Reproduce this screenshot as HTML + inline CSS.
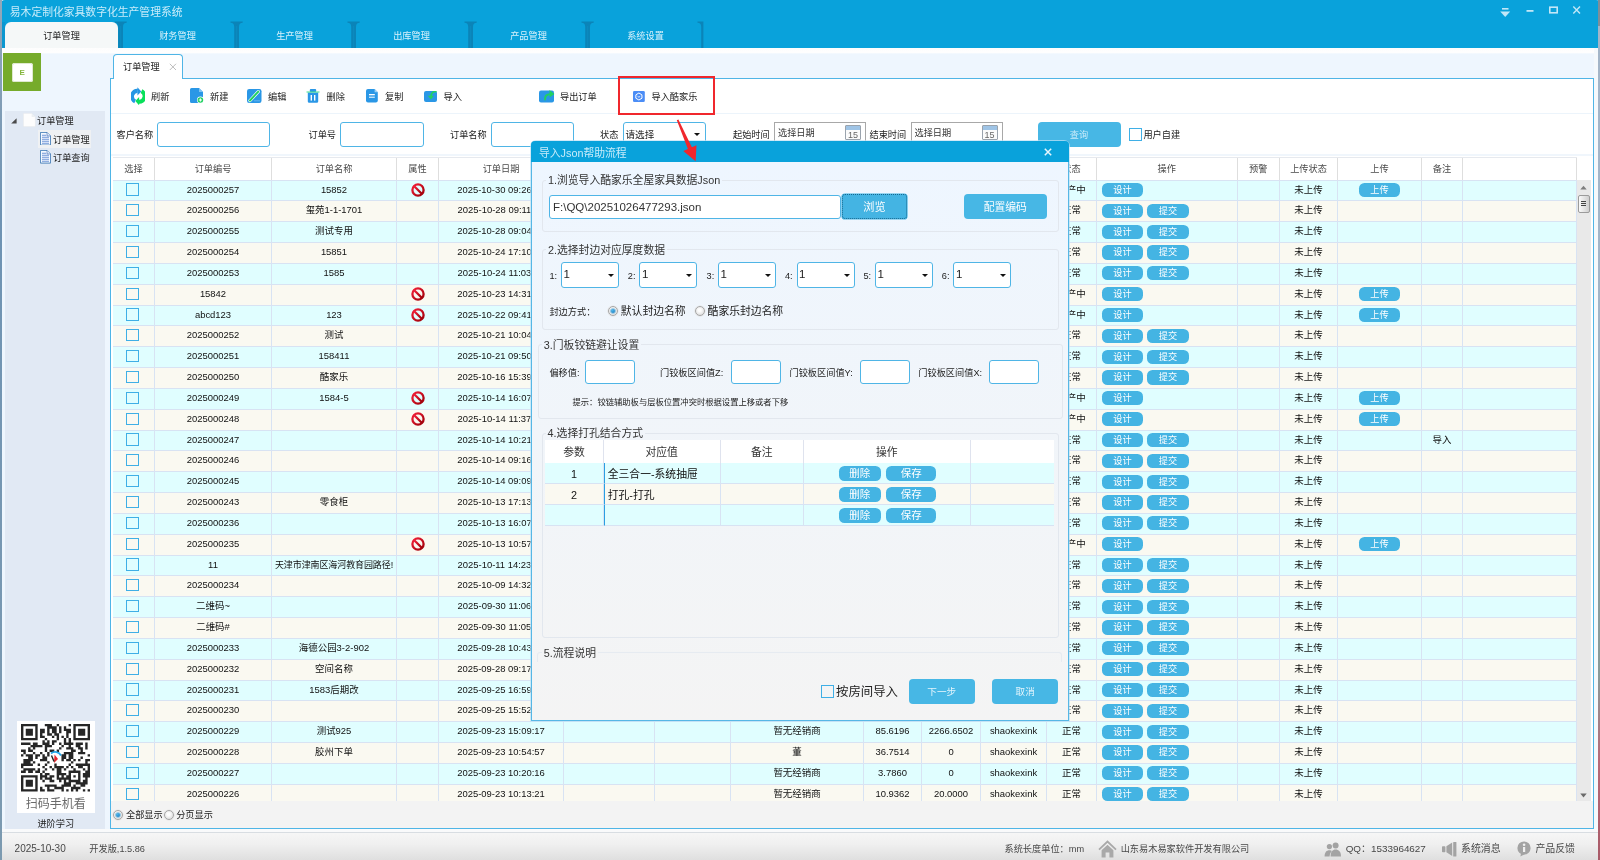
<!DOCTYPE html>
<html lang="zh-CN">
<head>
<meta charset="utf-8">
<title>易木定制化家具数字化生产管理系统</title>
<style>
*{box-sizing:border-box;margin:0;padding:0}
html,body{width:1600px;height:860px;overflow:hidden}
html{background:#8fa5b8}
body{position:relative;will-change:transform;background:#eef6fe;font-family:"Liberation Sans","Noto Sans CJK SC",sans-serif;font-size:9.2px;color:#222;line-height:1}
.abs{position:absolute}
/* ---------- top header ---------- */
#hdr{position:absolute;left:0;top:0;width:1600px;height:48px;background:#09a2db;border-radius:5px 4px 0 0}
#hdr .edgeL{position:absolute;left:1.7px;top:22px;width:3px;height:26px;background:#0a97d0}
#title{position:absolute;left:9.8px;top:5.7px;font-size:10.8px;color:#c9ecfa;line-height:13px;white-space:nowrap}
.mtab{position:absolute;top:22px;height:26px;width:113px;text-align:center;line-height:29px;font-size:9.2px;color:#d8f1fb;white-space:nowrap}
.mtab.act{z-index:2;background:#f5f8f8;color:#222;border-radius:6px 6px 0 0}
.msep{position:absolute;top:21px;width:13px;height:27px}
#hdrfade{position:absolute;left:2px;top:48px;width:1598px;height:5.5px;background:linear-gradient(#fdfdfd,#fefefe 75%,#eef6fe)}
/* ---------- sidebar ---------- */
#logo{position:absolute;left:3px;top:53px;width:38px;height:38px;background:#76ab2b}
#tree{position:absolute;left:5px;top:111px;width:100px;height:718px;background:#e1e9f4}
.tn{position:absolute;white-space:nowrap;font-size:9.2px;line-height:12px;color:#222}
/* ---------- inner tab + panel ---------- */
#itab{position:absolute;left:113px;top:54px;width:70px;height:25px;background:#fff;border:1px solid #4fb5e6;border-bottom:none;border-radius:4px 4px 0 0;z-index:2}
#itab span{position:absolute;left:9px;top:6px;font-size:9.2px;line-height:12px}
#panel{position:absolute;left:110px;top:78px;width:1484px;height:751px;background:#fff;border:1px solid #4fb5e6}
#panelbot{position:absolute;left:111px;top:800.5px;width:1482px;height:27.5px;background:#f3f3f3}
.tbtn{position:absolute;top:90px;height:14px;line-height:14px;font-size:9.2px;white-space:nowrap;color:#222}
.tbtn svg{position:absolute;left:0;top:0}
#tsep{position:absolute;left:111px;top:112.5px;width:1482px;height:1px;background:#ecf4fb}
.lbl{position:absolute;font-size:9.2px;line-height:12px;white-space:nowrap;color:#222}
.inp{position:absolute;background:#fff;border:1px solid #4fb5e6;border-radius:3px}
/* ---------- main table ---------- */
#grid{position:absolute;left:113px;top:157px;width:1463.5px;height:643.5px;overflow:hidden;background:#fff}
.thead{position:absolute;left:0;top:0;width:1464px;height:22.6px;background:#fff;border-top:1px solid #e6e9ee;border-bottom:none}
.th{position:absolute;top:0;height:21.6px;line-height:22.5px;text-align:center;color:#4a4a4a;border-right:1px solid #dedede;white-space:nowrap;overflow:hidden}
.tr{position:absolute;left:0;width:1464px;height:23px;border-top:1px solid #d8e3f3}
.tr.ra{background:#e0feff}
.tr.rb{background:#faf9f1}
.td{position:absolute;top:0;height:22px;line-height:18.4px;font-size:9.45px;text-align:center;border-right:1px solid #d8e3f3;white-space:nowrap;overflow:hidden;color:#111}
.td.lt{font-size:9px;letter-spacing:-0.1px}
.td.op{text-align:left;padding-left:4.6px}
.cb{display:inline-block;width:12.2px;height:12.2px;border:1.1px solid #3fafe6;background:transparent;margin-left:-2px;vertical-align:middle;margin-top:-1px}
.ban{display:inline-block;vertical-align:middle;margin-top:-0.5px;margin-left:0px}
.pill{display:inline-block;width:41.6px;height:14.3px;line-height:14.3px;border-radius:5.5px;background:#44b4e3;color:#fff;text-align:center;vertical-align:middle;margin-top:0px;font-size:9.2px}
.pill.p2{margin-left:4px}
/* ---------- footer ---------- */
#ftline{position:absolute;left:2px;top:832px;width:1598px;height:1px;background:#d8dde2}
#foot{position:absolute;left:2px;top:833px;width:1598px;height:27px;background:linear-gradient(#f6f6f6,#f0f0f0 40%,#dfdfdf)}
.ft{position:absolute;top:842.8px;font-size:9.2px;line-height:12px;white-space:nowrap;color:#484848}

.caret{position:absolute;width:0;height:0;border-left:3px solid transparent;border-right:3px solid transparent;border-top:3.5px solid #111}
.dinp{position:absolute;background:#fff;border:1px solid #a8a8a8}
.cal{position:absolute;width:16px;height:15px;border:1px solid #9aa3ad;background:#fbfbfb;border-radius:1px}
.cal b{position:absolute;left:0;top:0;width:14px;height:3.5px;background:#9fc4e6}
.cal i{position:absolute;left:0;top:4px;width:14px;text-align:center;font-style:normal;font-size:9px;line-height:10px;color:#666}
.radio{position:absolute;width:10px;height:10px;border-radius:50%;border:1px solid #a6a6a6;background:radial-gradient(circle at 45% 40%,#fdfdfd 20%,#d4d4d4);box-shadow:0 0 0 0.6px #e4e4e4}
.radio.on:after{content:"";position:absolute;left:2px;top:2px;width:4px;height:4px;border-radius:50%;background:radial-gradient(circle at 40% 35%,#49b4ea,#1173b8);box-shadow:0 0 0 0.8px #7dbbe0}
/* ---------- dialog ---------- */
#dlg{position:absolute;left:531px;top:141px;width:538px;height:580px;background:linear-gradient(#eef6ff 21px,#f4f4f4 100%);border-radius:5px 5px 0 0;border:1px solid #56b7e6;border-top:none;z-index:20;box-shadow:0 0 0 1px rgba(190,225,245,.7)}
#dlgt{position:absolute;left:-1px;top:0;width:538px;height:21px;background:#09a2db;border-radius:4px 4px 0 0}
#dlgt span{position:absolute;left:8px;top:5.5px;font-size:10.8px;line-height:13px;color:#c9ecfa;white-space:nowrap}
.gb{position:absolute;border:1px solid #e2e7ee;border-radius:3px}
.lg{position:absolute;font-size:10.8px;line-height:14px;white-space:nowrap;background:#f0f7fe;color:#333;padding:0 2px}
.dl{position:absolute;font-size:9.2px;line-height:12px;white-space:nowrap;color:#222}
.dbtn{position:absolute;background:#47b7e5;color:#fafdff;text-align:center;border-radius:4px;white-space:nowrap}
.sel{position:absolute;top:121.4px;width:58px;height:25.2px;background:#fff;border:1px solid #4fb5e6;border-radius:3px}
.sel span{position:absolute;left:1.6px;top:5px;font-size:11.5px;line-height:13px;color:#222}
.sel .caret{left:46px;top:10.5px}
.dth{position:absolute;top:0;height:23px;line-height:25px;text-align:center;font-size:10.8px;color:#333;border-right:1px solid #dfe3ee;background:#fff;white-space:nowrap}
.dtr{position:absolute;left:0;width:509px;height:20.9px}
.dtd{position:absolute;top:0;height:20.9px;line-height:22.6px;border-right:1px solid #d8e3f3;border-bottom:1px solid #d8e3f3;font-size:10.8px;white-space:nowrap;overflow:hidden;color:#111}
.dpill{position:absolute;top:3.2px;height:15px;line-height:15px;border-radius:5.5px;background:#44b4e3;color:#fff;text-align:center;font-size:10.5px}
</style>
</head>
<body>
<div id="hdr"><div class="edgeL"></div>
  <div id="title">易木定制化家具数字化生产管理系统</div>
  <div class="mtab act" style="left:5px">订单管理</div>
  <div class="mtab" style="left:121px">财务管理</div>
  <div class="mtab" style="left:238px">生产管理</div>
  <div class="mtab" style="left:355px">出库管理</div>
  <div class="mtab" style="left:472px">产品管理</div>
  <div class="mtab" style="left:589px">系统设置</div>
  <svg class="msep" style="left:113.8px" viewBox="0 0 13 27"><path d="M0.5 0.5 H12.7 V1.7 C10.2 1.7 9 3 9 6 V27 H4.2 V6 C4.2 3 3 1.7 0.5 1.7 Z" fill="#0b84b8"/><rect x="6" y="5" width="1.2" height="22" fill="#0b8abf"/></svg>
  <svg class="msep" style="left:229.8px" viewBox="0 0 13 27"><path d="M0.5 0.5 H12.7 V1.7 C10.2 1.7 9 3 9 6 V27 H4.2 V6 C4.2 3 3 1.7 0.5 1.7 Z" fill="#0b84b8"/><rect x="6" y="5" width="1.2" height="22" fill="#0b8abf"/></svg>
  <svg class="msep" style="left:346.8px" viewBox="0 0 13 27"><path d="M0.5 0.5 H12.7 V1.7 C10.2 1.7 9 3 9 6 V27 H4.2 V6 C4.2 3 3 1.7 0.5 1.7 Z" fill="#0b84b8"/><rect x="6" y="5" width="1.2" height="22" fill="#0b8abf"/></svg>
  <svg class="msep" style="left:463.8px" viewBox="0 0 13 27"><path d="M0.5 0.5 H12.7 V1.7 C10.2 1.7 9 3 9 6 V27 H4.2 V6 C4.2 3 3 1.7 0.5 1.7 Z" fill="#0b84b8"/><rect x="6" y="5" width="1.2" height="22" fill="#0b8abf"/></svg>
  <svg class="msep" style="left:580.8px" viewBox="0 0 13 27"><path d="M0.5 0.5 H12.7 V1.7 C10.2 1.7 9 3 9 6 V27 H4.2 V6 C4.2 3 3 1.7 0.5 1.7 Z" fill="#0b84b8"/><rect x="6" y="5" width="1.2" height="22" fill="#0b8abf"/></svg>
  <svg class="msep" style="left:696.8px" viewBox="0 0 13 27"><path d="M0.5 0.5 H6.4 V27 H4.2 V6 C4.2 3 3 1.7 0.5 1.7 Z" fill="#0b84b8"/></svg>
</div>
<div id="hdrfade"></div>
<div id="logo"></div>
<div id="tree"></div>
<div id="itab"><span>订单管理</span></div>
<div id="panel"></div>
<div id="panelbot"></div>
<div id="tsep"></div>
<div class="abs" style="left:111px;top:154px;width:1482px;height:2px;background:#f0f6fc"></div>
<!-- toolbar buttons -->
<div class="tbtn" style="left:130.6px;top:86.8px;width:15px;height:19px"><svg width="14.6" height="18.6" viewBox="0 0 15.6 18.6" preserveAspectRatio="none"><g fill="#2496e4"><path d="M4.4 14.4 A5.5 5.5 0 0 1 7.2 3.9" stroke="#2496e4" stroke-width="4.2" fill="none"/><path d="M6.9 0.2 L11 4.5 L6.9 8.5 Z"/></g><g fill="#08e05a" transform="rotate(180 7.8 9.3)"><path d="M4.4 14.4 A5.5 5.5 0 0 1 7.2 3.9" stroke="#08e05a" stroke-width="4.2" fill="none"/><path d="M6.9 0.2 L11 4.5 L6.9 8.5 Z"/></g></svg></div>
<div class="tbtn" style="left:151px">刷新</div>
<div class="tbtn" style="left:190px;top:88px;width:14px;height:16px"><svg width="14" height="16" viewBox="0 0 14 16"><path d="M1.5 0 H9 L13 4 V13.5 A1.5 1.5 0 0 1 11.5 15 H1.5 A1.5 1.5 0 0 1 0 13.5 V1.5 A1.5 1.5 0 0 1 1.5 0 Z" fill="#2a97e6"/><path d="M9 0 V4 H13 Z" fill="#7cc3f3"/><circle cx="10.4" cy="12" r="3.4" fill="#fff"/><circle cx="10.4" cy="12" r="2.8" fill="#1fd15f"/><path d="M10.4 10.4 V13.6 M8.8 12 H12" stroke="#fff" stroke-width="1"/></svg></div>
<div class="tbtn" style="left:210px">新建</div>
<div class="tbtn" style="left:247px;top:89px;width:15px;height:14px"><svg width="15" height="14" viewBox="0 0 15 14"><rect x="0" y="0" width="14.5" height="14" rx="2.2" fill="#2a97e6"/><path d="M3 11.5 L11.3 2.6" stroke="#fff" stroke-width="3.2" stroke-linecap="round"/><path d="M3 11.5 L11.3 2.6" stroke="#1fd15f" stroke-width="1.9" stroke-linecap="round"/><path d="M7.5 11.8 H12.5" stroke="#9bd2f7" stroke-width="1" stroke-dasharray="1 1"/></svg></div>
<div class="tbtn" style="left:268px">编辑</div>
<div class="tbtn" style="left:306px;top:89px;width:14px;height:14px"><svg width="14" height="14" viewBox="0 0 14 14"><rect x="3.8" y="0" width="6.4" height="3" rx="1" fill="#2a97e6"/><path d="M1.8 3.5 H12.2 V12.4 A1.4 1.4 0 0 1 10.8 13.8 H3.2 A1.4 1.4 0 0 1 1.8 12.4 Z" fill="#2a97e6"/><rect x="0.5" y="2.5" width="13" height="1" fill="#43e08a"/><rect x="4.6" y="6" width="1.4" height="5.6" fill="#fff"/><rect x="8" y="6" width="1.4" height="5.6" fill="#fff"/></svg></div>
<div class="tbtn" style="left:326.5px">删除</div>
<div class="tbtn" style="left:366px;top:89px;width:12px;height:14px"><svg width="12" height="14" viewBox="0 0 12 14"><path d="M2 0 H8.6 L11.8 3.2 V11.5 A2 2 0 0 1 9.8 13.5 H2 A2 2 0 0 1 0 11.5 V2 A2 2 0 0 1 2 0 Z" fill="#2a97e6"/><path d="M8.6 0 V3.2 H11.8 Z" fill="#9bd2f7"/><rect x="3" y="5" width="5.8" height="1.3" fill="#fff"/><rect x="3" y="7.6" width="5.8" height="1.3" fill="#cfe9fa"/></svg></div>
<div class="tbtn" style="left:385px">复制</div>
<div class="tbtn" style="left:424px;top:91px;width:13px;height:11px"><svg width="13" height="11" viewBox="0 0 13 11"><rect x="0" y="0" width="13" height="11" rx="2" fill="#2a97e6"/><path d="M12.6 0.3 C8.5 0.3 7 2.4 7 5.4" stroke="#22d162" stroke-width="1.7" fill="none"/><path d="M3.8 4.8 H10 L6.9 8.6 Z" fill="#22d162"/></svg></div>
<div class="tbtn" style="left:443.5px">导入</div>
<div class="tbtn" style="left:539px;top:89px;width:16px;height:14px"><svg width="16" height="14" viewBox="0 0 16 14"><rect x="0" y="1.6" width="15" height="12" rx="2" fill="#2a97e6"/><path d="M6 10.5 C6 6.6 8 5.2 11 5.2" stroke="#22d162" stroke-width="2" fill="none" stroke-linecap="round"/><path d="M10.4 1 L15.4 5 L10.6 8.6 Z" fill="#22d162"/></svg></div>
<div class="tbtn" style="left:560px">导出订单</div>
<div class="tbtn" style="left:632.5px;top:91px;width:12px;height:11px"><svg width="12" height="11" viewBox="0 0 12 11"><rect x="0" y="0" width="11.8" height="11" rx="1.3" fill="#4b8df6"/><path d="M5.9 2 L8.9 3.8 L9 7.2 L5.9 9 L2.8 7.2 L2.9 3.8 Z" fill="none" stroke="#fff" stroke-width="1" stroke-linejoin="round"/><path d="M4.6 5.4 Q5.9 6.9 7.2 5.4" stroke="#fff" stroke-width="0.8" fill="none"/></svg></div>
<div class="tbtn" style="left:651.5px">导入酷家乐</div>
<div class="abs" style="left:617.5px;top:75.5px;width:97px;height:39.5px;border:2.4px solid #f0272d"></div>
<!-- filter row -->
<div class="lbl" style="left:116.5px;top:128.5px">客户名称</div>
<div class="inp" style="left:157px;top:122px;width:113px;height:24.5px"></div>
<div class="lbl" style="left:308.5px;top:128.5px">订单号</div>
<div class="inp" style="left:340px;top:122px;width:83.5px;height:24.5px"></div>
<div class="lbl" style="left:450px;top:128.5px">订单名称</div>
<div class="inp" style="left:491px;top:122px;width:83px;height:24.5px"></div>
<div class="lbl" style="left:600px;top:128.5px">状态</div>
<div class="inp" style="left:622.5px;top:122px;width:83.5px;height:24.5px"><span class="lbl" style="left:2px;top:6px;font-size:9.6px">请选择</span><span class="caret" style="left:70px;top:10px"></span></div>
<div class="lbl" style="left:733px;top:128.5px">起始时间</div>
<div class="dinp" style="left:774px;top:121.5px;width:92px;height:22px"><span class="lbl" style="left:3px;top:4px;color:#333">选择日期</span><span class="cal" style="left:70px;top:2.5px"><b></b><i>15</i></span></div>
<div class="lbl" style="left:869.5px;top:128.5px">结束时间</div>
<div class="dinp" style="left:910.5px;top:121.5px;width:92px;height:22px"><span class="lbl" style="left:3px;top:4px;color:#333">选择日期</span><span class="cal" style="left:70px;top:2.5px"><b></b><i>15</i></span></div>
<div class="abs" style="left:1037.5px;top:121.5px;width:83px;height:25px;border-radius:4px;background:#47b7e5;color:#c9ebf9;text-align:center;line-height:26px;font-size:9.2px">查询</div>
<div class="abs" style="left:1129px;top:127.8px;width:12.6px;height:12.8px;border:1.1px solid #3fafe6;background:#fff"></div>
<div class="lbl" style="left:1143.4px;top:128.6px">用户自建</div>
<!-- red arrow -->
<svg class="abs" style="left:670px;top:115px;z-index:30" width="40" height="50" viewBox="0 0 40 50"><path d="M6.8 5.3 L8.4 4.6 L21.9 32.2 L26.5 30.2 L25.6 46.2 L13.3 36 L17.9 34 Z" fill="#f0272d"/></svg>
<!-- bottom radios -->
<span class="radio on" style="left:113px;top:809.5px"></span><div class="lbl" style="left:126px;top:808.5px">全部显示</div>
<span class="radio" style="left:163.5px;top:809.5px"></span><div class="lbl" style="left:176.2px;top:808.5px">分页显示</div>
<!-- window controls -->
<svg class="abs" style="left:1496px;top:4px" width="90" height="16" viewBox="0 0 90 16"><g fill="#c2e7f7" stroke="none"><rect x="6" y="4" width="6.5" height="1.6"/><path d="M4.2 7.6 H14.2 L9.2 13 Z"/><rect x="30.5" y="6" width="7" height="1.8"/></g><rect x="53.8" y="3.2" width="7.4" height="5.6" fill="none" stroke="#c2e7f7" stroke-width="1.6"/><path d="M77.3 2.4 L84 9.4 M84 2.4 L77.3 9.4" stroke="#c2e7f7" stroke-width="1.4"/></svg>

<div id="grid">
<div class="thead">
<div class="th" style="left:0px;width:42px">选择</div>
<div class="th" style="left:42px;width:117px">订单编号</div>
<div class="th" style="left:159px;width:125px">订单名称</div>
<div class="th" style="left:284px;width:42px">属性</div>
<div class="th" style="left:326px;width:125px">订单日期</div>
<div class="th" style="left:451px;width:91px">客户名称</div>
<div class="th" style="left:542px;width:76px">联系电话</div>
<div class="th" style="left:618px;width:133px">经销商</div>
<div class="th" style="left:751px;width:58px">面积</div>
<div class="th" style="left:809px;width:59px">金额</div>
<div class="th" style="left:868px;width:66px">创建人</div>
<div class="th" style="left:934px;width:50px">状态</div>
<div class="th" style="left:984px;width:140.5999999999999px">操作</div>
<div class="th" style="left:1124.6px;width:42.40000000000009px">预警</div>
<div class="th" style="left:1167px;width:58px">上传状态</div>
<div class="th" style="left:1225px;width:84px">上传</div>
<div class="th" style="left:1309px;width:41px">备注</div>
<div class="th" style="left:1350px;width:114px"></div>
</div>
<div class="tr ra" style="top:22.50px">
<div class="td" style="left:0px;width:42px"><span class="cb"></span></div>
<div class="td" style="left:42px;width:117px">2025000257</div>
<div class="td" style="left:159px;width:125px">15852</div>
<div class="td" style="left:284px;width:42px"><svg class="ban" width="14" height="14" viewBox="0 0 14 14"><defs><linearGradient id="bg0" x1="0" y1="0" x2="1" y2="1"><stop offset="0" stop-color="#f5203a"/><stop offset="1" stop-color="#9c0008"/></linearGradient></defs><circle cx="7" cy="7" r="5.6" fill="none" stroke="url(#bg0)" stroke-width="2.3"/><path d="M3.2 3.2 L10.8 10.8" stroke="url(#bg0)" stroke-width="2.3"/></svg></div>
<div class="td" style="left:326px;width:125px">2025-10-30 09:26:41</div>
<div class="td" style="left:451px;width:91px"></div>
<div class="td" style="left:542px;width:76px"></div>
<div class="td" style="left:618px;width:133px">暂无经销商</div>
<div class="td" style="left:751px;width:58px">12.5310</div>
<div class="td" style="left:809px;width:59px">0</div>
<div class="td" style="left:868px;width:66px">shaokexink</div>
<div class="td" style="left:934px;width:50px">生产中</div>
<div class="td op" style="left:984px;width:140.5999999999999px"><span class="pill p1">设计</span></div>
<div class="td" style="left:1124.6px;width:42.40000000000009px"></div>
<div class="td" style="left:1167px;width:58px">未上传</div>
<div class="td" style="left:1225px;width:84px"><span class="pill pu">上传</span></div>
<div class="td" style="left:1309px;width:41px"></div>
<div class="td" style="left:1350px;width:114px"></div>
</div>
<div class="tr rb" style="top:43.33px">
<div class="td" style="left:0px;width:42px"><span class="cb"></span></div>
<div class="td" style="left:42px;width:117px">2025000256</div>
<div class="td" style="left:159px;width:125px">玺苑1-1-1701</div>
<div class="td" style="left:284px;width:42px"></div>
<div class="td" style="left:326px;width:125px">2025-10-28 09:11:20</div>
<div class="td" style="left:451px;width:91px"></div>
<div class="td" style="left:542px;width:76px"></div>
<div class="td" style="left:618px;width:133px">暂无经销商</div>
<div class="td" style="left:751px;width:58px">8.2210</div>
<div class="td" style="left:809px;width:59px">0</div>
<div class="td" style="left:868px;width:66px">shaokexink</div>
<div class="td" style="left:934px;width:50px">正常</div>
<div class="td op" style="left:984px;width:140.5999999999999px"><span class="pill p1">设计</span><span class="pill p2">提交</span></div>
<div class="td" style="left:1124.6px;width:42.40000000000009px"></div>
<div class="td" style="left:1167px;width:58px">未上传</div>
<div class="td" style="left:1225px;width:84px"></div>
<div class="td" style="left:1309px;width:41px"></div>
<div class="td" style="left:1350px;width:114px"></div>
</div>
<div class="tr ra" style="top:64.17px">
<div class="td" style="left:0px;width:42px"><span class="cb"></span></div>
<div class="td" style="left:42px;width:117px">2025000255</div>
<div class="td" style="left:159px;width:125px">测试专用</div>
<div class="td" style="left:284px;width:42px"></div>
<div class="td" style="left:326px;width:125px">2025-10-28 09:04:33</div>
<div class="td" style="left:451px;width:91px"></div>
<div class="td" style="left:542px;width:76px"></div>
<div class="td" style="left:618px;width:133px">暂无经销商</div>
<div class="td" style="left:751px;width:58px">4.1100</div>
<div class="td" style="left:809px;width:59px">0</div>
<div class="td" style="left:868px;width:66px">shaokexink</div>
<div class="td" style="left:934px;width:50px">正常</div>
<div class="td op" style="left:984px;width:140.5999999999999px"><span class="pill p1">设计</span><span class="pill p2">提交</span></div>
<div class="td" style="left:1124.6px;width:42.40000000000009px"></div>
<div class="td" style="left:1167px;width:58px">未上传</div>
<div class="td" style="left:1225px;width:84px"></div>
<div class="td" style="left:1309px;width:41px"></div>
<div class="td" style="left:1350px;width:114px"></div>
</div>
<div class="tr rb" style="top:85.00px">
<div class="td" style="left:0px;width:42px"><span class="cb"></span></div>
<div class="td" style="left:42px;width:117px">2025000254</div>
<div class="td" style="left:159px;width:125px">15851</div>
<div class="td" style="left:284px;width:42px"></div>
<div class="td" style="left:326px;width:125px">2025-10-24 17:10:05</div>
<div class="td" style="left:451px;width:91px"></div>
<div class="td" style="left:542px;width:76px"></div>
<div class="td" style="left:618px;width:133px">暂无经销商</div>
<div class="td" style="left:751px;width:58px">6.3321</div>
<div class="td" style="left:809px;width:59px">0</div>
<div class="td" style="left:868px;width:66px">shaokexink</div>
<div class="td" style="left:934px;width:50px">正常</div>
<div class="td op" style="left:984px;width:140.5999999999999px"><span class="pill p1">设计</span><span class="pill p2">提交</span></div>
<div class="td" style="left:1124.6px;width:42.40000000000009px"></div>
<div class="td" style="left:1167px;width:58px">未上传</div>
<div class="td" style="left:1225px;width:84px"></div>
<div class="td" style="left:1309px;width:41px"></div>
<div class="td" style="left:1350px;width:114px"></div>
</div>
<div class="tr ra" style="top:105.83px">
<div class="td" style="left:0px;width:42px"><span class="cb"></span></div>
<div class="td" style="left:42px;width:117px">2025000253</div>
<div class="td" style="left:159px;width:125px">1585</div>
<div class="td" style="left:284px;width:42px"></div>
<div class="td" style="left:326px;width:125px">2025-10-24 11:03:48</div>
<div class="td" style="left:451px;width:91px"></div>
<div class="td" style="left:542px;width:76px"></div>
<div class="td" style="left:618px;width:133px">暂无经销商</div>
<div class="td" style="left:751px;width:58px">9.0012</div>
<div class="td" style="left:809px;width:59px">0</div>
<div class="td" style="left:868px;width:66px">shaokexink</div>
<div class="td" style="left:934px;width:50px">正常</div>
<div class="td op" style="left:984px;width:140.5999999999999px"><span class="pill p1">设计</span><span class="pill p2">提交</span></div>
<div class="td" style="left:1124.6px;width:42.40000000000009px"></div>
<div class="td" style="left:1167px;width:58px">未上传</div>
<div class="td" style="left:1225px;width:84px"></div>
<div class="td" style="left:1309px;width:41px"></div>
<div class="td" style="left:1350px;width:114px"></div>
</div>
<div class="tr rb" style="top:126.67px">
<div class="td" style="left:0px;width:42px"><span class="cb"></span></div>
<div class="td" style="left:42px;width:117px">15842</div>
<div class="td" style="left:159px;width:125px"></div>
<div class="td" style="left:284px;width:42px"><svg class="ban" width="14" height="14" viewBox="0 0 14 14"><defs><linearGradient id="bg5" x1="0" y1="0" x2="1" y2="1"><stop offset="0" stop-color="#f5203a"/><stop offset="1" stop-color="#9c0008"/></linearGradient></defs><circle cx="7" cy="7" r="5.6" fill="none" stroke="url(#bg5)" stroke-width="2.3"/><path d="M3.2 3.2 L10.8 10.8" stroke="url(#bg5)" stroke-width="2.3"/></svg></div>
<div class="td" style="left:326px;width:125px">2025-10-23 14:31:12</div>
<div class="td" style="left:451px;width:91px"></div>
<div class="td" style="left:542px;width:76px"></div>
<div class="td" style="left:618px;width:133px">暂无经销商</div>
<div class="td" style="left:751px;width:58px">3.2200</div>
<div class="td" style="left:809px;width:59px">0</div>
<div class="td" style="left:868px;width:66px">shaokexink</div>
<div class="td" style="left:934px;width:50px">生产中</div>
<div class="td op" style="left:984px;width:140.5999999999999px"><span class="pill p1">设计</span></div>
<div class="td" style="left:1124.6px;width:42.40000000000009px"></div>
<div class="td" style="left:1167px;width:58px">未上传</div>
<div class="td" style="left:1225px;width:84px"><span class="pill pu">上传</span></div>
<div class="td" style="left:1309px;width:41px"></div>
<div class="td" style="left:1350px;width:114px"></div>
</div>
<div class="tr ra" style="top:147.50px">
<div class="td" style="left:0px;width:42px"><span class="cb"></span></div>
<div class="td" style="left:42px;width:117px">abcd123</div>
<div class="td" style="left:159px;width:125px">123</div>
<div class="td" style="left:284px;width:42px"><svg class="ban" width="14" height="14" viewBox="0 0 14 14"><defs><linearGradient id="bg6" x1="0" y1="0" x2="1" y2="1"><stop offset="0" stop-color="#f5203a"/><stop offset="1" stop-color="#9c0008"/></linearGradient></defs><circle cx="7" cy="7" r="5.6" fill="none" stroke="url(#bg6)" stroke-width="2.3"/><path d="M3.2 3.2 L10.8 10.8" stroke="url(#bg6)" stroke-width="2.3"/></svg></div>
<div class="td" style="left:326px;width:125px">2025-10-22 09:41:27</div>
<div class="td" style="left:451px;width:91px"></div>
<div class="td" style="left:542px;width:76px"></div>
<div class="td" style="left:618px;width:133px">暂无经销商</div>
<div class="td" style="left:751px;width:58px">1.2300</div>
<div class="td" style="left:809px;width:59px">0</div>
<div class="td" style="left:868px;width:66px">shaokexink</div>
<div class="td" style="left:934px;width:50px">生产中</div>
<div class="td op" style="left:984px;width:140.5999999999999px"><span class="pill p1">设计</span></div>
<div class="td" style="left:1124.6px;width:42.40000000000009px"></div>
<div class="td" style="left:1167px;width:58px">未上传</div>
<div class="td" style="left:1225px;width:84px"><span class="pill pu">上传</span></div>
<div class="td" style="left:1309px;width:41px"></div>
<div class="td" style="left:1350px;width:114px"></div>
</div>
<div class="tr rb" style="top:168.33px">
<div class="td" style="left:0px;width:42px"><span class="cb"></span></div>
<div class="td" style="left:42px;width:117px">2025000252</div>
<div class="td" style="left:159px;width:125px">测试</div>
<div class="td" style="left:284px;width:42px"></div>
<div class="td" style="left:326px;width:125px">2025-10-21 10:04:51</div>
<div class="td" style="left:451px;width:91px"></div>
<div class="td" style="left:542px;width:76px"></div>
<div class="td" style="left:618px;width:133px">暂无经销商</div>
<div class="td" style="left:751px;width:58px">5.4410</div>
<div class="td" style="left:809px;width:59px">0</div>
<div class="td" style="left:868px;width:66px">shaokexink</div>
<div class="td" style="left:934px;width:50px">正常</div>
<div class="td op" style="left:984px;width:140.5999999999999px"><span class="pill p1">设计</span><span class="pill p2">提交</span></div>
<div class="td" style="left:1124.6px;width:42.40000000000009px"></div>
<div class="td" style="left:1167px;width:58px">未上传</div>
<div class="td" style="left:1225px;width:84px"></div>
<div class="td" style="left:1309px;width:41px"></div>
<div class="td" style="left:1350px;width:114px"></div>
</div>
<div class="tr ra" style="top:189.17px">
<div class="td" style="left:0px;width:42px"><span class="cb"></span></div>
<div class="td" style="left:42px;width:117px">2025000251</div>
<div class="td" style="left:159px;width:125px">158411</div>
<div class="td" style="left:284px;width:42px"></div>
<div class="td" style="left:326px;width:125px">2025-10-21 09:50:16</div>
<div class="td" style="left:451px;width:91px"></div>
<div class="td" style="left:542px;width:76px"></div>
<div class="td" style="left:618px;width:133px">暂无经销商</div>
<div class="td" style="left:751px;width:58px">7.7752</div>
<div class="td" style="left:809px;width:59px">0</div>
<div class="td" style="left:868px;width:66px">shaokexink</div>
<div class="td" style="left:934px;width:50px">正常</div>
<div class="td op" style="left:984px;width:140.5999999999999px"><span class="pill p1">设计</span><span class="pill p2">提交</span></div>
<div class="td" style="left:1124.6px;width:42.40000000000009px"></div>
<div class="td" style="left:1167px;width:58px">未上传</div>
<div class="td" style="left:1225px;width:84px"></div>
<div class="td" style="left:1309px;width:41px"></div>
<div class="td" style="left:1350px;width:114px"></div>
</div>
<div class="tr rb" style="top:210.00px">
<div class="td" style="left:0px;width:42px"><span class="cb"></span></div>
<div class="td" style="left:42px;width:117px">2025000250</div>
<div class="td" style="left:159px;width:125px">酷家乐</div>
<div class="td" style="left:284px;width:42px"></div>
<div class="td" style="left:326px;width:125px">2025-10-16 15:39:02</div>
<div class="td" style="left:451px;width:91px"></div>
<div class="td" style="left:542px;width:76px"></div>
<div class="td" style="left:618px;width:133px">暂无经销商</div>
<div class="td" style="left:751px;width:58px">2.3180</div>
<div class="td" style="left:809px;width:59px">0</div>
<div class="td" style="left:868px;width:66px">shaokexink</div>
<div class="td" style="left:934px;width:50px">正常</div>
<div class="td op" style="left:984px;width:140.5999999999999px"><span class="pill p1">设计</span><span class="pill p2">提交</span></div>
<div class="td" style="left:1124.6px;width:42.40000000000009px"></div>
<div class="td" style="left:1167px;width:58px">未上传</div>
<div class="td" style="left:1225px;width:84px"></div>
<div class="td" style="left:1309px;width:41px"></div>
<div class="td" style="left:1350px;width:114px"></div>
</div>
<div class="tr ra" style="top:230.83px">
<div class="td" style="left:0px;width:42px"><span class="cb"></span></div>
<div class="td" style="left:42px;width:117px">2025000249</div>
<div class="td" style="left:159px;width:125px">1584-5</div>
<div class="td" style="left:284px;width:42px"><svg class="ban" width="14" height="14" viewBox="0 0 14 14"><defs><linearGradient id="bg10" x1="0" y1="0" x2="1" y2="1"><stop offset="0" stop-color="#f5203a"/><stop offset="1" stop-color="#9c0008"/></linearGradient></defs><circle cx="7" cy="7" r="5.6" fill="none" stroke="url(#bg10)" stroke-width="2.3"/><path d="M3.2 3.2 L10.8 10.8" stroke="url(#bg10)" stroke-width="2.3"/></svg></div>
<div class="td" style="left:326px;width:125px">2025-10-14 16:07:44</div>
<div class="td" style="left:451px;width:91px"></div>
<div class="td" style="left:542px;width:76px"></div>
<div class="td" style="left:618px;width:133px">暂无经销商</div>
<div class="td" style="left:751px;width:58px">6.0012</div>
<div class="td" style="left:809px;width:59px">0</div>
<div class="td" style="left:868px;width:66px">shaokexink</div>
<div class="td" style="left:934px;width:50px">生产中</div>
<div class="td op" style="left:984px;width:140.5999999999999px"><span class="pill p1">设计</span></div>
<div class="td" style="left:1124.6px;width:42.40000000000009px"></div>
<div class="td" style="left:1167px;width:58px">未上传</div>
<div class="td" style="left:1225px;width:84px"><span class="pill pu">上传</span></div>
<div class="td" style="left:1309px;width:41px"></div>
<div class="td" style="left:1350px;width:114px"></div>
</div>
<div class="tr rb" style="top:251.67px">
<div class="td" style="left:0px;width:42px"><span class="cb"></span></div>
<div class="td" style="left:42px;width:117px">2025000248</div>
<div class="td" style="left:159px;width:125px"></div>
<div class="td" style="left:284px;width:42px"><svg class="ban" width="14" height="14" viewBox="0 0 14 14"><defs><linearGradient id="bg11" x1="0" y1="0" x2="1" y2="1"><stop offset="0" stop-color="#f5203a"/><stop offset="1" stop-color="#9c0008"/></linearGradient></defs><circle cx="7" cy="7" r="5.6" fill="none" stroke="url(#bg11)" stroke-width="2.3"/><path d="M3.2 3.2 L10.8 10.8" stroke="url(#bg11)" stroke-width="2.3"/></svg></div>
<div class="td" style="left:326px;width:125px">2025-10-14 11:37:19</div>
<div class="td" style="left:451px;width:91px"></div>
<div class="td" style="left:542px;width:76px"></div>
<div class="td" style="left:618px;width:133px">暂无经销商</div>
<div class="td" style="left:751px;width:58px">4.2000</div>
<div class="td" style="left:809px;width:59px">0</div>
<div class="td" style="left:868px;width:66px">shaokexink</div>
<div class="td" style="left:934px;width:50px">生产中</div>
<div class="td op" style="left:984px;width:140.5999999999999px"><span class="pill p1">设计</span></div>
<div class="td" style="left:1124.6px;width:42.40000000000009px"></div>
<div class="td" style="left:1167px;width:58px">未上传</div>
<div class="td" style="left:1225px;width:84px"><span class="pill pu">上传</span></div>
<div class="td" style="left:1309px;width:41px"></div>
<div class="td" style="left:1350px;width:114px"></div>
</div>
<div class="tr ra" style="top:272.50px">
<div class="td" style="left:0px;width:42px"><span class="cb"></span></div>
<div class="td" style="left:42px;width:117px">2025000247</div>
<div class="td" style="left:159px;width:125px"></div>
<div class="td" style="left:284px;width:42px"></div>
<div class="td" style="left:326px;width:125px">2025-10-14 10:21:36</div>
<div class="td" style="left:451px;width:91px"></div>
<div class="td" style="left:542px;width:76px"></div>
<div class="td" style="left:618px;width:133px">暂无经销商</div>
<div class="td" style="left:751px;width:58px">3.1000</div>
<div class="td" style="left:809px;width:59px">0</div>
<div class="td" style="left:868px;width:66px">shaokexink</div>
<div class="td" style="left:934px;width:50px">正常</div>
<div class="td op" style="left:984px;width:140.5999999999999px"><span class="pill p1">设计</span><span class="pill p2">提交</span></div>
<div class="td" style="left:1124.6px;width:42.40000000000009px"></div>
<div class="td" style="left:1167px;width:58px">未上传</div>
<div class="td" style="left:1225px;width:84px"></div>
<div class="td" style="left:1309px;width:41px">导入</div>
<div class="td" style="left:1350px;width:114px"></div>
</div>
<div class="tr rb" style="top:293.33px">
<div class="td" style="left:0px;width:42px"><span class="cb"></span></div>
<div class="td" style="left:42px;width:117px">2025000246</div>
<div class="td" style="left:159px;width:125px"></div>
<div class="td" style="left:284px;width:42px"></div>
<div class="td" style="left:326px;width:125px">2025-10-14 09:16:08</div>
<div class="td" style="left:451px;width:91px"></div>
<div class="td" style="left:542px;width:76px"></div>
<div class="td" style="left:618px;width:133px">暂无经销商</div>
<div class="td" style="left:751px;width:58px">2.8000</div>
<div class="td" style="left:809px;width:59px">0</div>
<div class="td" style="left:868px;width:66px">shaokexink</div>
<div class="td" style="left:934px;width:50px">正常</div>
<div class="td op" style="left:984px;width:140.5999999999999px"><span class="pill p1">设计</span><span class="pill p2">提交</span></div>
<div class="td" style="left:1124.6px;width:42.40000000000009px"></div>
<div class="td" style="left:1167px;width:58px">未上传</div>
<div class="td" style="left:1225px;width:84px"></div>
<div class="td" style="left:1309px;width:41px"></div>
<div class="td" style="left:1350px;width:114px"></div>
</div>
<div class="tr ra" style="top:314.17px">
<div class="td" style="left:0px;width:42px"><span class="cb"></span></div>
<div class="td" style="left:42px;width:117px">2025000245</div>
<div class="td" style="left:159px;width:125px"></div>
<div class="td" style="left:284px;width:42px"></div>
<div class="td" style="left:326px;width:125px">2025-10-14 09:09:55</div>
<div class="td" style="left:451px;width:91px"></div>
<div class="td" style="left:542px;width:76px"></div>
<div class="td" style="left:618px;width:133px">暂无经销商</div>
<div class="td" style="left:751px;width:58px">2.1000</div>
<div class="td" style="left:809px;width:59px">0</div>
<div class="td" style="left:868px;width:66px">shaokexink</div>
<div class="td" style="left:934px;width:50px">正常</div>
<div class="td op" style="left:984px;width:140.5999999999999px"><span class="pill p1">设计</span><span class="pill p2">提交</span></div>
<div class="td" style="left:1124.6px;width:42.40000000000009px"></div>
<div class="td" style="left:1167px;width:58px">未上传</div>
<div class="td" style="left:1225px;width:84px"></div>
<div class="td" style="left:1309px;width:41px"></div>
<div class="td" style="left:1350px;width:114px"></div>
</div>
<div class="tr rb" style="top:335.00px">
<div class="td" style="left:0px;width:42px"><span class="cb"></span></div>
<div class="td" style="left:42px;width:117px">2025000243</div>
<div class="td" style="left:159px;width:125px">零食柜</div>
<div class="td" style="left:284px;width:42px"></div>
<div class="td" style="left:326px;width:125px">2025-10-13 17:13:29</div>
<div class="td" style="left:451px;width:91px"></div>
<div class="td" style="left:542px;width:76px"></div>
<div class="td" style="left:618px;width:133px">暂无经销商</div>
<div class="td" style="left:751px;width:58px">1.9000</div>
<div class="td" style="left:809px;width:59px">0</div>
<div class="td" style="left:868px;width:66px">shaokexink</div>
<div class="td" style="left:934px;width:50px">正常</div>
<div class="td op" style="left:984px;width:140.5999999999999px"><span class="pill p1">设计</span><span class="pill p2">提交</span></div>
<div class="td" style="left:1124.6px;width:42.40000000000009px"></div>
<div class="td" style="left:1167px;width:58px">未上传</div>
<div class="td" style="left:1225px;width:84px"></div>
<div class="td" style="left:1309px;width:41px"></div>
<div class="td" style="left:1350px;width:114px"></div>
</div>
<div class="tr ra" style="top:355.83px">
<div class="td" style="left:0px;width:42px"><span class="cb"></span></div>
<div class="td" style="left:42px;width:117px">2025000236</div>
<div class="td" style="left:159px;width:125px"></div>
<div class="td" style="left:284px;width:42px"></div>
<div class="td" style="left:326px;width:125px">2025-10-13 16:07:14</div>
<div class="td" style="left:451px;width:91px"></div>
<div class="td" style="left:542px;width:76px"></div>
<div class="td" style="left:618px;width:133px">暂无经销商</div>
<div class="td" style="left:751px;width:58px">5.5000</div>
<div class="td" style="left:809px;width:59px">0</div>
<div class="td" style="left:868px;width:66px">shaokexink</div>
<div class="td" style="left:934px;width:50px">正常</div>
<div class="td op" style="left:984px;width:140.5999999999999px"><span class="pill p1">设计</span><span class="pill p2">提交</span></div>
<div class="td" style="left:1124.6px;width:42.40000000000009px"></div>
<div class="td" style="left:1167px;width:58px">未上传</div>
<div class="td" style="left:1225px;width:84px"></div>
<div class="td" style="left:1309px;width:41px"></div>
<div class="td" style="left:1350px;width:114px"></div>
</div>
<div class="tr rb" style="top:376.67px">
<div class="td" style="left:0px;width:42px"><span class="cb"></span></div>
<div class="td" style="left:42px;width:117px">2025000235</div>
<div class="td" style="left:159px;width:125px"></div>
<div class="td" style="left:284px;width:42px"><svg class="ban" width="14" height="14" viewBox="0 0 14 14"><defs><linearGradient id="bg17" x1="0" y1="0" x2="1" y2="1"><stop offset="0" stop-color="#f5203a"/><stop offset="1" stop-color="#9c0008"/></linearGradient></defs><circle cx="7" cy="7" r="5.6" fill="none" stroke="url(#bg17)" stroke-width="2.3"/><path d="M3.2 3.2 L10.8 10.8" stroke="url(#bg17)" stroke-width="2.3"/></svg></div>
<div class="td" style="left:326px;width:125px">2025-10-13 10:57:40</div>
<div class="td" style="left:451px;width:91px"></div>
<div class="td" style="left:542px;width:76px"></div>
<div class="td" style="left:618px;width:133px">暂无经销商</div>
<div class="td" style="left:751px;width:58px">7.2000</div>
<div class="td" style="left:809px;width:59px">0</div>
<div class="td" style="left:868px;width:66px">shaokexink</div>
<div class="td" style="left:934px;width:50px">生产中</div>
<div class="td op" style="left:984px;width:140.5999999999999px"><span class="pill p1">设计</span></div>
<div class="td" style="left:1124.6px;width:42.40000000000009px"></div>
<div class="td" style="left:1167px;width:58px">未上传</div>
<div class="td" style="left:1225px;width:84px"><span class="pill pu">上传</span></div>
<div class="td" style="left:1309px;width:41px"></div>
<div class="td" style="left:1350px;width:114px"></div>
</div>
<div class="tr ra" style="top:397.50px">
<div class="td" style="left:0px;width:42px"><span class="cb"></span></div>
<div class="td" style="left:42px;width:117px">11</div>
<div class="td lt" style="left:159px;width:125px">天津市津南区海河教育园路径!</div>
<div class="td" style="left:284px;width:42px"></div>
<div class="td" style="left:326px;width:125px">2025-10-11 14:23:07</div>
<div class="td" style="left:451px;width:91px"></div>
<div class="td" style="left:542px;width:76px"></div>
<div class="td" style="left:618px;width:133px">暂无经销商</div>
<div class="td" style="left:751px;width:58px">3.3000</div>
<div class="td" style="left:809px;width:59px">0</div>
<div class="td" style="left:868px;width:66px">shaokexink</div>
<div class="td" style="left:934px;width:50px">正常</div>
<div class="td op" style="left:984px;width:140.5999999999999px"><span class="pill p1">设计</span><span class="pill p2">提交</span></div>
<div class="td" style="left:1124.6px;width:42.40000000000009px"></div>
<div class="td" style="left:1167px;width:58px">未上传</div>
<div class="td" style="left:1225px;width:84px"></div>
<div class="td" style="left:1309px;width:41px"></div>
<div class="td" style="left:1350px;width:114px"></div>
</div>
<div class="tr rb" style="top:418.33px">
<div class="td" style="left:0px;width:42px"><span class="cb"></span></div>
<div class="td" style="left:42px;width:117px">2025000234</div>
<div class="td" style="left:159px;width:125px"></div>
<div class="td" style="left:284px;width:42px"></div>
<div class="td" style="left:326px;width:125px">2025-10-09 14:32:58</div>
<div class="td" style="left:451px;width:91px"></div>
<div class="td" style="left:542px;width:76px"></div>
<div class="td" style="left:618px;width:133px">暂无经销商</div>
<div class="td" style="left:751px;width:58px">4.4000</div>
<div class="td" style="left:809px;width:59px">0</div>
<div class="td" style="left:868px;width:66px">shaokexink</div>
<div class="td" style="left:934px;width:50px">正常</div>
<div class="td op" style="left:984px;width:140.5999999999999px"><span class="pill p1">设计</span><span class="pill p2">提交</span></div>
<div class="td" style="left:1124.6px;width:42.40000000000009px"></div>
<div class="td" style="left:1167px;width:58px">未上传</div>
<div class="td" style="left:1225px;width:84px"></div>
<div class="td" style="left:1309px;width:41px"></div>
<div class="td" style="left:1350px;width:114px"></div>
</div>
<div class="tr ra" style="top:439.17px">
<div class="td" style="left:0px;width:42px"><span class="cb"></span></div>
<div class="td" style="left:42px;width:117px">二维码~</div>
<div class="td" style="left:159px;width:125px"></div>
<div class="td" style="left:284px;width:42px"></div>
<div class="td" style="left:326px;width:125px">2025-09-30 11:06:21</div>
<div class="td" style="left:451px;width:91px"></div>
<div class="td" style="left:542px;width:76px"></div>
<div class="td" style="left:618px;width:133px">暂无经销商</div>
<div class="td" style="left:751px;width:58px">1.1000</div>
<div class="td" style="left:809px;width:59px">0</div>
<div class="td" style="left:868px;width:66px">shaokexink</div>
<div class="td" style="left:934px;width:50px">正常</div>
<div class="td op" style="left:984px;width:140.5999999999999px"><span class="pill p1">设计</span><span class="pill p2">提交</span></div>
<div class="td" style="left:1124.6px;width:42.40000000000009px"></div>
<div class="td" style="left:1167px;width:58px">未上传</div>
<div class="td" style="left:1225px;width:84px"></div>
<div class="td" style="left:1309px;width:41px"></div>
<div class="td" style="left:1350px;width:114px"></div>
</div>
<div class="tr rb" style="top:460.00px">
<div class="td" style="left:0px;width:42px"><span class="cb"></span></div>
<div class="td" style="left:42px;width:117px">二维码#</div>
<div class="td" style="left:159px;width:125px"></div>
<div class="td" style="left:284px;width:42px"></div>
<div class="td" style="left:326px;width:125px">2025-09-30 11:05:46</div>
<div class="td" style="left:451px;width:91px"></div>
<div class="td" style="left:542px;width:76px"></div>
<div class="td" style="left:618px;width:133px">暂无经销商</div>
<div class="td" style="left:751px;width:58px">1.1000</div>
<div class="td" style="left:809px;width:59px">0</div>
<div class="td" style="left:868px;width:66px">shaokexink</div>
<div class="td" style="left:934px;width:50px">正常</div>
<div class="td op" style="left:984px;width:140.5999999999999px"><span class="pill p1">设计</span><span class="pill p2">提交</span></div>
<div class="td" style="left:1124.6px;width:42.40000000000009px"></div>
<div class="td" style="left:1167px;width:58px">未上传</div>
<div class="td" style="left:1225px;width:84px"></div>
<div class="td" style="left:1309px;width:41px"></div>
<div class="td" style="left:1350px;width:114px"></div>
</div>
<div class="tr ra" style="top:480.83px">
<div class="td" style="left:0px;width:42px"><span class="cb"></span></div>
<div class="td" style="left:42px;width:117px">2025000233</div>
<div class="td" style="left:159px;width:125px">海德公园3-2-902</div>
<div class="td" style="left:284px;width:42px"></div>
<div class="td" style="left:326px;width:125px">2025-09-28 10:43:30</div>
<div class="td" style="left:451px;width:91px"></div>
<div class="td" style="left:542px;width:76px"></div>
<div class="td" style="left:618px;width:133px">暂无经销商</div>
<div class="td" style="left:751px;width:58px">9.9000</div>
<div class="td" style="left:809px;width:59px">0</div>
<div class="td" style="left:868px;width:66px">shaokexink</div>
<div class="td" style="left:934px;width:50px">正常</div>
<div class="td op" style="left:984px;width:140.5999999999999px"><span class="pill p1">设计</span><span class="pill p2">提交</span></div>
<div class="td" style="left:1124.6px;width:42.40000000000009px"></div>
<div class="td" style="left:1167px;width:58px">未上传</div>
<div class="td" style="left:1225px;width:84px"></div>
<div class="td" style="left:1309px;width:41px"></div>
<div class="td" style="left:1350px;width:114px"></div>
</div>
<div class="tr rb" style="top:501.67px">
<div class="td" style="left:0px;width:42px"><span class="cb"></span></div>
<div class="td" style="left:42px;width:117px">2025000232</div>
<div class="td" style="left:159px;width:125px">空间名称</div>
<div class="td" style="left:284px;width:42px"></div>
<div class="td" style="left:326px;width:125px">2025-09-28 09:17:03</div>
<div class="td" style="left:451px;width:91px"></div>
<div class="td" style="left:542px;width:76px"></div>
<div class="td" style="left:618px;width:133px">暂无经销商</div>
<div class="td" style="left:751px;width:58px">2.2000</div>
<div class="td" style="left:809px;width:59px">0</div>
<div class="td" style="left:868px;width:66px">shaokexink</div>
<div class="td" style="left:934px;width:50px">正常</div>
<div class="td op" style="left:984px;width:140.5999999999999px"><span class="pill p1">设计</span><span class="pill p2">提交</span></div>
<div class="td" style="left:1124.6px;width:42.40000000000009px"></div>
<div class="td" style="left:1167px;width:58px">未上传</div>
<div class="td" style="left:1225px;width:84px"></div>
<div class="td" style="left:1309px;width:41px"></div>
<div class="td" style="left:1350px;width:114px"></div>
</div>
<div class="tr ra" style="top:522.50px">
<div class="td" style="left:0px;width:42px"><span class="cb"></span></div>
<div class="td" style="left:42px;width:117px">2025000231</div>
<div class="td" style="left:159px;width:125px">1583后期改</div>
<div class="td" style="left:284px;width:42px"></div>
<div class="td" style="left:326px;width:125px">2025-09-25 16:59:12</div>
<div class="td" style="left:451px;width:91px"></div>
<div class="td" style="left:542px;width:76px"></div>
<div class="td" style="left:618px;width:133px">暂无经销商</div>
<div class="td" style="left:751px;width:58px">6.6000</div>
<div class="td" style="left:809px;width:59px">0</div>
<div class="td" style="left:868px;width:66px">shaokexink</div>
<div class="td" style="left:934px;width:50px">正常</div>
<div class="td op" style="left:984px;width:140.5999999999999px"><span class="pill p1">设计</span><span class="pill p2">提交</span></div>
<div class="td" style="left:1124.6px;width:42.40000000000009px"></div>
<div class="td" style="left:1167px;width:58px">未上传</div>
<div class="td" style="left:1225px;width:84px"></div>
<div class="td" style="left:1309px;width:41px"></div>
<div class="td" style="left:1350px;width:114px"></div>
</div>
<div class="tr rb" style="top:543.33px">
<div class="td" style="left:0px;width:42px"><span class="cb"></span></div>
<div class="td" style="left:42px;width:117px">2025000230</div>
<div class="td" style="left:159px;width:125px"></div>
<div class="td" style="left:284px;width:42px"></div>
<div class="td" style="left:326px;width:125px">2025-09-25 15:52:37</div>
<div class="td" style="left:451px;width:91px"></div>
<div class="td" style="left:542px;width:76px"></div>
<div class="td" style="left:618px;width:133px">暂无经销商</div>
<div class="td" style="left:751px;width:58px">3.0000</div>
<div class="td" style="left:809px;width:59px">0</div>
<div class="td" style="left:868px;width:66px">shaokexink</div>
<div class="td" style="left:934px;width:50px">正常</div>
<div class="td op" style="left:984px;width:140.5999999999999px"><span class="pill p1">设计</span><span class="pill p2">提交</span></div>
<div class="td" style="left:1124.6px;width:42.40000000000009px"></div>
<div class="td" style="left:1167px;width:58px">未上传</div>
<div class="td" style="left:1225px;width:84px"></div>
<div class="td" style="left:1309px;width:41px"></div>
<div class="td" style="left:1350px;width:114px"></div>
</div>
<div class="tr ra" style="top:564.17px">
<div class="td" style="left:0px;width:42px"><span class="cb"></span></div>
<div class="td" style="left:42px;width:117px">2025000229</div>
<div class="td" style="left:159px;width:125px">测试925</div>
<div class="td" style="left:284px;width:42px"></div>
<div class="td" style="left:326px;width:125px">2025-09-23 15:09:17</div>
<div class="td" style="left:451px;width:91px"></div>
<div class="td" style="left:542px;width:76px"></div>
<div class="td" style="left:618px;width:133px">暂无经销商</div>
<div class="td" style="left:751px;width:58px">85.6196</div>
<div class="td" style="left:809px;width:59px">2266.6502</div>
<div class="td" style="left:868px;width:66px">shaokexink</div>
<div class="td" style="left:934px;width:50px">正常</div>
<div class="td op" style="left:984px;width:140.5999999999999px"><span class="pill p1">设计</span><span class="pill p2">提交</span></div>
<div class="td" style="left:1124.6px;width:42.40000000000009px"></div>
<div class="td" style="left:1167px;width:58px">未上传</div>
<div class="td" style="left:1225px;width:84px"></div>
<div class="td" style="left:1309px;width:41px"></div>
<div class="td" style="left:1350px;width:114px"></div>
</div>
<div class="tr rb" style="top:585.00px">
<div class="td" style="left:0px;width:42px"><span class="cb"></span></div>
<div class="td" style="left:42px;width:117px">2025000228</div>
<div class="td" style="left:159px;width:125px">胶州下单</div>
<div class="td" style="left:284px;width:42px"></div>
<div class="td" style="left:326px;width:125px">2025-09-23 10:54:57</div>
<div class="td" style="left:451px;width:91px"></div>
<div class="td" style="left:542px;width:76px"></div>
<div class="td" style="left:618px;width:133px">董</div>
<div class="td" style="left:751px;width:58px">36.7514</div>
<div class="td" style="left:809px;width:59px">0</div>
<div class="td" style="left:868px;width:66px">shaokexink</div>
<div class="td" style="left:934px;width:50px">正常</div>
<div class="td op" style="left:984px;width:140.5999999999999px"><span class="pill p1">设计</span><span class="pill p2">提交</span></div>
<div class="td" style="left:1124.6px;width:42.40000000000009px"></div>
<div class="td" style="left:1167px;width:58px">未上传</div>
<div class="td" style="left:1225px;width:84px"></div>
<div class="td" style="left:1309px;width:41px"></div>
<div class="td" style="left:1350px;width:114px"></div>
</div>
<div class="tr ra" style="top:605.83px">
<div class="td" style="left:0px;width:42px"><span class="cb"></span></div>
<div class="td" style="left:42px;width:117px">2025000227</div>
<div class="td" style="left:159px;width:125px"></div>
<div class="td" style="left:284px;width:42px"></div>
<div class="td" style="left:326px;width:125px">2025-09-23 10:20:16</div>
<div class="td" style="left:451px;width:91px"></div>
<div class="td" style="left:542px;width:76px"></div>
<div class="td" style="left:618px;width:133px">暂无经销商</div>
<div class="td" style="left:751px;width:58px">3.7860</div>
<div class="td" style="left:809px;width:59px">0</div>
<div class="td" style="left:868px;width:66px">shaokexink</div>
<div class="td" style="left:934px;width:50px">正常</div>
<div class="td op" style="left:984px;width:140.5999999999999px"><span class="pill p1">设计</span><span class="pill p2">提交</span></div>
<div class="td" style="left:1124.6px;width:42.40000000000009px"></div>
<div class="td" style="left:1167px;width:58px">未上传</div>
<div class="td" style="left:1225px;width:84px"></div>
<div class="td" style="left:1309px;width:41px"></div>
<div class="td" style="left:1350px;width:114px"></div>
</div>
<div class="tr rb" style="top:626.67px">
<div class="td" style="left:0px;width:42px"><span class="cb"></span></div>
<div class="td" style="left:42px;width:117px">2025000226</div>
<div class="td" style="left:159px;width:125px"></div>
<div class="td" style="left:284px;width:42px"></div>
<div class="td" style="left:326px;width:125px">2025-09-23 10:13:21</div>
<div class="td" style="left:451px;width:91px"></div>
<div class="td" style="left:542px;width:76px"></div>
<div class="td" style="left:618px;width:133px">暂无经销商</div>
<div class="td" style="left:751px;width:58px">10.9362</div>
<div class="td" style="left:809px;width:59px">20.0000</div>
<div class="td" style="left:868px;width:66px">shaokexink</div>
<div class="td" style="left:934px;width:50px">正常</div>
<div class="td op" style="left:984px;width:140.5999999999999px"><span class="pill p1">设计</span><span class="pill p2">提交</span></div>
<div class="td" style="left:1124.6px;width:42.40000000000009px"></div>
<div class="td" style="left:1167px;width:58px">未上传</div>
<div class="td" style="left:1225px;width:84px"></div>
<div class="td" style="left:1309px;width:41px"></div>
<div class="td" style="left:1350px;width:114px"></div>
</div>
</div>
<div class="abs" style="left:1576.5px;top:179.5px;width:14.5px;height:621px;background:#e9e9e9"></div>
<div class="abs" style="left:1577.5px;top:194.5px;width:12px;height:18.5px;border:1px solid #9b9b9b;border-radius:2px;background:linear-gradient(90deg,#fafafa,#cfcfcf)"><i class="abs" style="left:2.5px;top:5.5px;width:5px;height:1px;background:#444;box-shadow:0 2px 0 #444,0 4px 0 #444"></i></div>
<svg class="abs" style="left:1580px;top:184.5px" width="7" height="5" viewBox="0 0 7 5"><path d="M0.3 4.6 L3.5 0.8 L6.7 4.6 Z" fill="#7d7d7d"/></svg>
<svg class="abs" style="left:1580px;top:792.5px" width="7" height="5" viewBox="0 0 7 5"><path d="M0.3 0.6 L3.5 4.4 L6.7 0.6 Z" fill="#6a6a6a"/></svg>
<div class="abs" style="left:1594px;top:48px;width:4px;height:785px;background:#f5f9fc"></div>
<div class="abs" style="left:1598px;top:26px;width:2px;height:834px;background:linear-gradient(#a3b5c8 0,#a3b5c8 42%,#8a9a98 50%,#8a9a98 78%,#b86a78 88%,#a85a68 100%);z-index:5"></div>
<div class="abs" style="left:1598px;top:0;width:2px;height:27px;background:#7f8e98"></div>
<div class="abs" style="left:0;top:0;width:1.7px;height:860px;background:linear-gradient(#93a8ba,#6e93b3 25%,#7697b2 60%,#7c9ab0);z-index:6"></div>
<svg class="abs" style="left:168.5px;top:62.5px;z-index:3" width="8" height="8" viewBox="0 0 8 8"><path d="M0.8 0.8 L7 7 M7 0.8 L0.8 7" stroke="#b5b5b5" stroke-width="0.9"/></svg>
<!-- logo inner -->
<div class="abs" style="left:12px;top:62.5px;width:20.5px;height:19px;background:#fff;border-radius:2.5px;box-shadow:inset 0 0 0 1px #dfe9cf;color:#86b73e;font-weight:bold;font-size:8px;line-height:19px;text-align:center">E</div>
<!-- tree -->
<svg class="abs" style="left:11px;top:117.5px" width="6" height="6" viewBox="0 0 6 6"><path d="M5.6 0.2 V5.6 H0.2 Z" fill="#4a4a4a"/></svg>
<svg class="abs" style="left:22.5px;top:113px" width="13" height="14" viewBox="0 0 13 14"><path d="M1 0.3 H8.6 L12.4 4 V13 A0.7 0.7 0 0 1 11.7 13.7 H1 A0.7 0.7 0 0 1 0.3 13 V1 A0.7 0.7 0 0 1 1 0.3 Z" fill="#fdfdfd" stroke="#e3e6ea" stroke-width="0.6"/><path d="M8.6 0.3 V4 H12.4 Z" fill="#eceff2"/></svg>
<div class="tn" style="left:37px;top:114.5px">订单管理</div>
<div class="abs" style="left:37.8px;top:130px;width:53.6px;height:18px;background:#eff1f3"></div>
<svg class="abs docic" style="left:40px;top:131.5px" width="11" height="13.5" viewBox="0 0 11 13.5"><path d="M0.4 0.4 H7 L10.6 4 V13.1 H0.4 Z" fill="#f4f9ff" stroke="#3c78b4" stroke-width="0.9"/><path d="M7 0.4 V4 H10.6" fill="#dfe9f7" stroke="#4d77b8" stroke-width="0.7"/><path d="M2 3.2 H6 M2 5.2 H9 M2 7.2 H9 M2 9.2 H9 M2 11.2 H9" stroke="#6f95d6" stroke-width="1.05"/></svg>
<div class="tn" style="left:53px;top:133.5px">订单管理</div>
<svg class="abs docic" style="left:40px;top:150px" width="11" height="13.5" viewBox="0 0 11 13.5"><path d="M0.4 0.4 H7 L10.6 4 V13.1 H0.4 Z" fill="#f4f9ff" stroke="#3c78b4" stroke-width="0.9"/><path d="M7 0.4 V4 H10.6" fill="#dfe9f7" stroke="#4d77b8" stroke-width="0.7"/><path d="M2 3.2 H6 M2 5.2 H9 M2 7.2 H9 M2 9.2 H9 M2 11.2 H9" stroke="#6f95d6" stroke-width="1.05"/></svg>
<div class="tn" style="left:53px;top:151.5px">订单查询</div>
<!-- QR -->
<div class="abs" style="left:16.6px;top:720.8px;width:78.4px;height:91.8px;background:#fff"></div>
<svg class="abs" style="left:21px;top:724px" width="69.0" height="67.5" viewBox="0 0 69.0 67.5"><path d="M0.00 0.00h16.66v2.33h-16.66zM23.79 0.00h7.14v2.33h-7.14zM35.69 0.00h2.38v2.33h-2.38zM47.59 0.00h2.38v2.33h-2.38zM52.34 0.00h16.66v2.33h-16.66zM0.00 2.33h2.38v2.33h-2.38zM14.28 2.33h2.38v2.33h-2.38zM26.17 2.33h9.52v2.33h-9.52zM38.07 2.33h2.38v2.33h-2.38zM42.83 2.33h2.38v2.33h-2.38zM52.34 2.33h2.38v2.33h-2.38zM66.62 2.33h2.38v2.33h-2.38zM0.00 4.66h2.38v2.33h-2.38zM4.76 4.66h7.14v2.33h-7.14zM14.28 4.66h2.38v2.33h-2.38zM19.03 4.66h4.76v2.33h-4.76zM26.17 4.66h2.38v2.33h-2.38zM30.93 4.66h4.76v2.33h-4.76zM38.07 4.66h2.38v2.33h-2.38zM42.83 4.66h7.14v2.33h-7.14zM52.34 4.66h2.38v2.33h-2.38zM57.10 4.66h7.14v2.33h-7.14zM66.62 4.66h2.38v2.33h-2.38zM0.00 6.98h2.38v2.33h-2.38zM4.76 6.98h7.14v2.33h-7.14zM14.28 6.98h2.38v2.33h-2.38zM19.03 6.98h4.76v2.33h-4.76zM26.17 6.98h2.38v2.33h-2.38zM30.93 6.98h4.76v2.33h-4.76zM38.07 6.98h2.38v2.33h-2.38zM45.21 6.98h4.76v2.33h-4.76zM52.34 6.98h2.38v2.33h-2.38zM57.10 6.98h7.14v2.33h-7.14zM66.62 6.98h2.38v2.33h-2.38zM0.00 9.31h2.38v2.33h-2.38zM4.76 9.31h7.14v2.33h-7.14zM14.28 9.31h2.38v2.33h-2.38zM19.03 9.31h2.38v2.33h-2.38zM26.17 9.31h4.76v2.33h-4.76zM33.31 9.31h4.76v2.33h-4.76zM45.21 9.31h2.38v2.33h-2.38zM52.34 9.31h2.38v2.33h-2.38zM57.10 9.31h7.14v2.33h-7.14zM66.62 9.31h2.38v2.33h-2.38zM0.00 11.64h2.38v2.33h-2.38zM14.28 11.64h2.38v2.33h-2.38zM19.03 11.64h4.76v2.33h-4.76zM30.93 11.64h2.38v2.33h-2.38zM35.69 11.64h2.38v2.33h-2.38zM40.45 11.64h2.38v2.33h-2.38zM45.21 11.64h2.38v2.33h-2.38zM52.34 11.64h2.38v2.33h-2.38zM66.62 11.64h2.38v2.33h-2.38zM0.00 13.97h16.66v2.33h-16.66zM23.79 13.97h2.38v2.33h-2.38zM35.69 13.97h2.38v2.33h-2.38zM42.83 13.97h2.38v2.33h-2.38zM47.59 13.97h2.38v2.33h-2.38zM52.34 13.97h16.66v2.33h-16.66zM21.41 16.29h2.38v2.33h-2.38zM26.17 16.29h2.38v2.33h-2.38zM30.93 16.29h4.76v2.33h-4.76zM42.83 16.29h2.38v2.33h-2.38zM47.59 16.29h2.38v2.33h-2.38zM0.00 18.62h9.52v2.33h-9.52zM11.90 18.62h4.76v2.33h-4.76zM21.41 18.62h7.14v2.33h-7.14zM30.93 18.62h2.38v2.33h-2.38zM38.07 18.62h2.38v2.33h-2.38zM42.83 18.62h9.52v2.33h-9.52zM54.72 18.62h7.14v2.33h-7.14zM64.24 18.62h2.38v2.33h-2.38zM9.52 20.95h11.90v2.33h-11.90zM23.79 20.95h7.14v2.33h-7.14zM40.45 20.95h2.38v2.33h-2.38zM47.59 20.95h2.38v2.33h-2.38zM54.72 20.95h4.76v2.33h-4.76zM64.24 20.95h2.38v2.33h-2.38zM7.14 23.28h2.38v2.33h-2.38zM11.90 23.28h2.38v2.33h-2.38zM23.79 23.28h2.38v2.33h-2.38zM38.07 23.28h2.38v2.33h-2.38zM45.21 23.28h7.14v2.33h-7.14zM57.10 23.28h4.76v2.33h-4.76zM64.24 23.28h2.38v2.33h-2.38zM0.00 25.60h4.76v2.33h-4.76zM7.14 25.60h4.76v2.33h-4.76zM23.79 25.60h2.38v2.33h-2.38zM28.55 25.60h4.76v2.33h-4.76zM35.69 25.60h2.38v2.33h-2.38zM49.97 25.60h4.76v2.33h-4.76zM59.48 25.60h2.38v2.33h-2.38zM2.38 27.93h2.38v2.33h-2.38zM11.90 27.93h2.38v2.33h-2.38zM19.03 27.93h2.38v2.33h-2.38zM26.17 27.93h2.38v2.33h-2.38zM42.83 27.93h9.52v2.33h-9.52zM57.10 27.93h7.14v2.33h-7.14zM0.00 30.26h2.38v2.33h-2.38zM4.76 30.26h7.14v2.33h-7.14zM14.28 30.26h4.76v2.33h-4.76zM21.41 30.26h2.38v2.33h-2.38zM26.17 30.26h2.38v2.33h-2.38zM40.45 30.26h4.76v2.33h-4.76zM47.59 30.26h4.76v2.33h-4.76zM66.62 30.26h2.38v2.33h-2.38zM7.14 32.59h4.76v2.33h-4.76zM14.28 32.59h2.38v2.33h-2.38zM21.41 32.59h4.76v2.33h-4.76zM40.45 32.59h4.76v2.33h-4.76zM47.59 32.59h4.76v2.33h-4.76zM59.48 32.59h2.38v2.33h-2.38zM2.38 34.91h9.52v2.33h-9.52zM19.03 34.91h7.14v2.33h-7.14zM40.45 34.91h2.38v2.33h-2.38zM45.21 34.91h4.76v2.33h-4.76zM52.34 34.91h2.38v2.33h-2.38zM57.10 34.91h2.38v2.33h-2.38zM64.24 34.91h4.76v2.33h-4.76zM2.38 37.24h7.14v2.33h-7.14zM11.90 37.24h2.38v2.33h-2.38zM26.17 37.24h2.38v2.33h-2.38zM49.97 37.24h2.38v2.33h-2.38zM64.24 37.24h2.38v2.33h-2.38zM0.00 39.57h11.90v2.33h-11.90zM16.66 39.57h2.38v2.33h-2.38zM23.79 39.57h2.38v2.33h-2.38zM33.31 39.57h2.38v2.33h-2.38zM47.59 39.57h2.38v2.33h-2.38zM54.72 39.57h14.28v2.33h-14.28zM0.00 41.90h2.38v2.33h-2.38zM21.41 41.90h2.38v2.33h-2.38zM28.55 41.90h2.38v2.33h-2.38zM33.31 41.90h9.52v2.33h-9.52zM45.21 41.90h2.38v2.33h-2.38zM49.97 41.90h2.38v2.33h-2.38zM57.10 41.90h4.76v2.33h-4.76zM66.62 41.90h2.38v2.33h-2.38zM2.38 44.22h11.90v2.33h-11.90zM16.66 44.22h2.38v2.33h-2.38zM23.79 44.22h2.38v2.33h-2.38zM30.93 44.22h2.38v2.33h-2.38zM35.69 44.22h4.76v2.33h-4.76zM42.83 44.22h2.38v2.33h-2.38zM52.34 44.22h2.38v2.33h-2.38zM61.86 44.22h2.38v2.33h-2.38zM66.62 44.22h2.38v2.33h-2.38zM0.00 46.55h4.76v2.33h-4.76zM7.14 46.55h4.76v2.33h-4.76zM14.28 46.55h4.76v2.33h-4.76zM21.41 46.55h2.38v2.33h-2.38zM35.69 46.55h4.76v2.33h-4.76zM47.59 46.55h11.90v2.33h-11.90zM64.24 46.55h4.76v2.33h-4.76zM19.03 48.88h2.38v2.33h-2.38zM23.79 48.88h4.76v2.33h-4.76zM35.69 48.88h9.52v2.33h-9.52zM47.59 48.88h2.38v2.33h-2.38zM57.10 48.88h2.38v2.33h-2.38zM61.86 48.88h7.14v2.33h-7.14zM0.00 51.21h16.66v2.33h-16.66zM19.03 51.21h7.14v2.33h-7.14zM28.55 51.21h4.76v2.33h-4.76zM35.69 51.21h2.38v2.33h-2.38zM40.45 51.21h2.38v2.33h-2.38zM45.21 51.21h4.76v2.33h-4.76zM52.34 51.21h2.38v2.33h-2.38zM57.10 51.21h2.38v2.33h-2.38zM61.86 51.21h7.14v2.33h-7.14zM0.00 53.53h2.38v2.33h-2.38zM14.28 53.53h2.38v2.33h-2.38zM19.03 53.53h2.38v2.33h-2.38zM23.79 53.53h7.14v2.33h-7.14zM35.69 53.53h14.28v2.33h-14.28zM57.10 53.53h2.38v2.33h-2.38zM64.24 53.53h2.38v2.33h-2.38zM0.00 55.86h2.38v2.33h-2.38zM4.76 55.86h7.14v2.33h-7.14zM14.28 55.86h2.38v2.33h-2.38zM21.41 55.86h2.38v2.33h-2.38zM28.55 55.86h4.76v2.33h-4.76zM38.07 55.86h2.38v2.33h-2.38zM42.83 55.86h2.38v2.33h-2.38zM47.59 55.86h11.90v2.33h-11.90zM61.86 55.86h4.76v2.33h-4.76zM0.00 58.19h2.38v2.33h-2.38zM4.76 58.19h7.14v2.33h-7.14zM14.28 58.19h2.38v2.33h-2.38zM42.83 58.19h7.14v2.33h-7.14zM54.72 58.19h11.90v2.33h-11.90zM0.00 60.52h2.38v2.33h-2.38zM4.76 60.52h7.14v2.33h-7.14zM14.28 60.52h2.38v2.33h-2.38zM23.79 60.52h11.90v2.33h-11.90zM40.45 60.52h9.52v2.33h-9.52zM52.34 60.52h2.38v2.33h-2.38zM59.48 60.52h4.76v2.33h-4.76zM0.00 62.84h2.38v2.33h-2.38zM14.28 62.84h2.38v2.33h-2.38zM19.03 62.84h2.38v2.33h-2.38zM26.17 62.84h2.38v2.33h-2.38zM33.31 62.84h9.52v2.33h-9.52zM49.97 62.84h9.52v2.33h-9.52zM0.00 65.17h16.66v2.33h-16.66zM19.03 65.17h4.76v2.33h-4.76zM26.17 65.17h7.14v2.33h-7.14zM40.45 65.17h2.38v2.33h-2.38zM45.21 65.17h2.38v2.33h-2.38zM49.97 65.17h2.38v2.33h-2.38zM54.72 65.17h2.38v2.33h-2.38zM61.86 65.17h2.38v2.33h-2.38zM66.62 65.17h2.38v2.33h-2.38z" fill="#262626"/><path d="M30 29.5 A6.5 6.5 0 0 1 40 31.5" stroke="#23a6e8" stroke-width="1.8" fill="none"/><path d="M33.5 30.5 L37 35 L33 39 Z" fill="#e8242b"/><path d="M30.5 31.5 L33 37.5" stroke="#222" stroke-width="1.4"/></svg>
<div class="abs" style="left:16.6px;top:797.3px;width:78.4px;text-align:center;font-size:12px;line-height:15px;color:#6a6a6a;white-space:nowrap">扫码手机看</div>
<div class="abs" style="left:5px;top:817.5px;width:100px;text-align:center;font-size:9.2px;line-height:12px;color:#222;white-space:nowrap;padding-left:1.5px">进阶学习</div>

<div class="abs" style="left:2px;top:829px;width:1596px;height:4px;background:#f9fafb"></div>
<div id="ftline"></div>
<div id="foot"></div>
<div class="ft" style="left:14.6px;font-size:10px">2025-10-30</div>
<div class="ft" style="left:89.3px">开发版,1.5.86</div>
<div class="ft" style="left:1004.5px">系统长度单位：mm</div>
<svg class="abs" style="left:1098px;top:839.5px" width="19" height="18" viewBox="0 0 19 18"><path d="M1 9.6 L9.5 1.6 L18 9.6" fill="none" stroke="#a9a9a9" stroke-width="1.8" stroke-linejoin="miter"/><path d="M3.6 10.2 L9.5 4.8 L15.4 10.2 V17.6 H11.4 V12.6 H7.6 V17.6 H3.6 Z" fill="#a9a9a9"/></svg>
<div class="ft" style="left:1120.7px">山东易木易家软件开发有限公司</div>
<svg class="abs" style="left:1323.5px;top:841.5px" width="18" height="15" viewBox="0 0 18 15"><g fill="#a3a3a3"><circle cx="11.6" cy="3.6" r="3"/><path d="M6.6 14.6 C6.6 9.6 8.6 7.6 11.6 7.6 C14.6 7.6 17 9.6 17 14.6 Z"/><circle cx="5.4" cy="4.6" r="2.6"/><path d="M0.6 14.6 C0.6 10.2 2.6 8.2 5.4 8.2 C6.6 8.2 7.4 8.6 8 9 C6.6 10.4 5.8 12 5.6 14.6 Z"/></g></svg>
<div class="ft" style="left:1345.7px;font-size:9.9px">QQ：1533964627</div>
<svg class="abs" style="left:1441.5px;top:841.5px" width="16" height="15" viewBox="0 0 16 15"><g fill="#a3a3a3"><rect x="0" y="4.2" width="3.4" height="6" rx="0.8"/><path d="M4.4 4.2 L10.2 0.6 V14 L4.4 10.2 Z"/><rect x="11.2" y="0" width="3.2" height="14.6" rx="0.6"/></g></svg>
<div class="ft" style="left:1461px;font-size:9.9px">系统消息</div>
<svg class="abs" style="left:1517px;top:841px" width="15" height="16" viewBox="0 0 15 16"><circle cx="7" cy="7" r="6.6" fill="#a3a3a3"/><path d="M4 12.2 L3.4 15.6 L8 13 Z" fill="#a3a3a3"/><rect x="6" y="6" width="2.2" height="5" fill="#f0f0f0"/><circle cx="7.1" cy="3.7" r="1.3" fill="#f0f0f0"/></svg>
<div class="ft" style="left:1535.4px;font-size:9.9px">产品反馈</div>

<div id="dlg"><div class="abs" style="left:-1px;top:0;width:538px;height:579px">
 <div id="dlgt" style="left:0"><span>导入Json帮助流程</span>
  <svg class="abs" style="left:513px;top:7px" width="8" height="8" viewBox="0 0 8 8"><path d="M0.8 0.8 L7.2 7.2 M7.2 0.8 L0.8 7.2" stroke="#e6f6fd" stroke-width="1.5"/></svg>
 </div>
 <!-- group 1 : offsets relative to dialog (531,141) -->
 <div class="gb" style="left:10.7px;top:38.5px;width:517px;height:52.5px"></div>
 <div class="lg" style="left:15px;top:32px;background:#eef6ff">1.浏览导入酷家乐全屋家具数据Json</div>
 <div class="inp" style="left:18.4px;top:53.6px;width:291.5px;height:24.5px"><span class="dl" style="left:2.6px;top:4px;font-size:11.5px;line-height:14px;color:#333">F:\QQ\20251026477293.json</span></div>
 <div class="dbtn" style="left:311px;top:52.8px;width:65px;height:25.4px;border-radius:3px;line-height:25px;font-size:11.2px;border:1px dotted #17688f;background:#44b4e3;box-shadow:0 0 0 0.6px #44b4e3">浏览</div>
 <div class="dbtn" style="left:432.5px;top:52.8px;width:83.5px;height:25.4px;line-height:26.5px;font-size:10.8px">配置编码</div>
 <!-- group 2 -->
 <div class="gb" style="left:10.7px;top:108.2px;width:517px;height:81px"></div>
 <div class="lg" style="left:15px;top:102px;background:#eff6fd">2.选择封边对应厚度数据</div>
 <div class="dl" style="left:18.4px;top:129px">1:</div><div class="sel" style="left:30px"><span>1</span><i class="caret"></i></div>
 <div class="dl" style="left:96.8px;top:129px">2:</div><div class="sel" style="left:108.4px"><span>1</span><i class="caret"></i></div>
 <div class="dl" style="left:175.6px;top:129px">3:</div><div class="sel" style="left:186.8px"><span>1</span><i class="caret"></i></div>
 <div class="dl" style="left:254px;top:129px">4:</div><div class="sel" style="left:265.5px"><span>1</span><i class="caret"></i></div>
 <div class="dl" style="left:332.4px;top:129px">5:</div><div class="sel" style="left:343.9px"><span>1</span><i class="caret"></i></div>
 <div class="dl" style="left:410.8px;top:129px">6:</div><div class="sel" style="left:422.3px"><span>1</span><i class="caret"></i></div>
 <div class="dl" style="left:18.4px;top:164.5px">封边方式：</div>
 <span class="radio on" style="left:76.5px;top:165px"></span><div class="dl" style="left:89.8px;top:163px;font-size:10.8px;line-height:14px">默认封边名称</div>
 <span class="radio" style="left:163.5px;top:165px"></span><div class="dl" style="left:176.6px;top:163px;font-size:10.8px;line-height:14px">酷家乐封边名称</div>
 <!-- group 3 -->
 <div class="gb" style="left:6.5px;top:203px;width:525px;height:74.5px"></div>
 <div class="lg" style="left:10.8px;top:197px;background:#f0f5fb">3.门板铰链避让设置</div>
 <div class="dl" style="left:18.4px;top:225.5px">偏移值:</div><div class="inp" style="left:54px;top:218.5px;width:50px;height:24.5px"></div>
 <div class="dl" style="left:129px;top:225.5px">门铰板区间值Z:</div><div class="inp" style="left:200px;top:218.5px;width:50px;height:24.5px"></div>
 <div class="dl" style="left:258.5px;top:225.5px">门铰板区间值Y:</div><div class="inp" style="left:329.2px;top:218.5px;width:50px;height:24.5px"></div>
 <div class="dl" style="left:387.3px;top:225.5px">门铰板区间值X:</div><div class="inp" style="left:458px;top:218.5px;width:50px;height:24.5px"></div>
 <div class="dl" style="left:41.5px;top:256px;font-size:8.3px;line-height:11px">提示：铰链辅助板与层板位置冲突时根据设置上移或者下移</div>
 <!-- group 4 -->
 <div class="gb" style="left:10.6px;top:291.6px;width:517px;height:205.5px"></div>
 <div class="lg" style="left:14.6px;top:285px;background:#f1f5fa">4.选择打孔结合方式</div>
 <div class="abs" style="left:14.2px;top:299.4px;width:509px;height:88px">
  <div class="dth" style="left:0;width:58.6px">参数</div><div class="dth" style="left:58.6px;width:116.8px">对应值</div><div class="dth" style="left:175.4px;width:83.2px">备注</div><div class="dth" style="left:258.6px;width:166.9px">操作</div><div class="dth" style="left:425.5px;width:83.5px;border-right:none"></div>
  <div class="dtr" style="top:22.8px;background:#e0feff"><div class="dtd" style="left:0;width:58.6px;text-align:center">1</div><div class="dtd" style="left:58.6px;width:116.8px;padding-left:3px;border-left:1.3px solid #2a9fe2">全三合一-系统抽屉</div><div class="dtd" style="left:175.4px;width:83.2px"></div><div class="dtd" style="left:258.6px;width:166.9px"><span class="dpill" style="left:35px;width:42px">删除</span><span class="dpill" style="left:82.4px;width:50px">保存</span></div><div class="dtd" style="left:425.5px;width:83.5px;border-right:none"></div></div>
  <div class="dtr" style="top:43.6px;background:#faf9f1"><div class="dtd" style="left:0;width:58.6px;text-align:center">2</div><div class="dtd" style="left:58.6px;width:116.8px;padding-left:3px;border-left:1.3px solid #2a9fe2">打孔-打孔</div><div class="dtd" style="left:175.4px;width:83.2px"></div><div class="dtd" style="left:258.6px;width:166.9px"><span class="dpill" style="left:35px;width:42px">删除</span><span class="dpill" style="left:82.4px;width:50px">保存</span></div><div class="dtd" style="left:425.5px;width:83.5px;border-right:none"></div></div>
  <div class="dtr" style="top:64.5px;background:#e0feff"><div class="dtd" style="left:0;width:58.6px;text-align:center"></div><div class="dtd" style="left:58.6px;width:116.8px;padding-left:3px;border-left:1.3px solid #2a9fe2"></div><div class="dtd" style="left:175.4px;width:83.2px"></div><div class="dtd" style="left:258.6px;width:166.9px"><span class="dpill" style="left:35px;width:42px">删除</span><span class="dpill" style="left:82.4px;width:50px">保存</span></div><div class="dtd" style="left:425.5px;width:83.5px;border-right:none"></div></div>
 </div>
 <!-- group 5 -->
 <div class="abs" style="left:6.3px;top:511.4px;width:525px;height:10px;border:1px solid #e6ebf1;border-bottom:none;border-radius:3px 3px 0 0"></div>
 <div class="lg" style="left:10.8px;top:505px;background:#f3f4f5">5.流程说明</div>
 <div class="abs" style="left:290.3px;top:544.2px;width:12.6px;height:12.6px;border:1.1px solid #3fafe6;background:transparent"></div>
 <div class="dl" style="left:305px;top:542.5px;font-size:12.4px;line-height:16px">按房间导入</div>
 <div class="dbtn" style="left:377.5px;top:537.7px;width:66.4px;height:25px;line-height:25.5px;font-size:9.6px;color:#e2f4fc">下一步</div>
 <div class="dbtn" style="left:461px;top:537.7px;width:66.4px;height:25px;line-height:25.5px;font-size:9.6px;color:#e2f4fc">取消</div>
</div></div>

</body>
</html>
